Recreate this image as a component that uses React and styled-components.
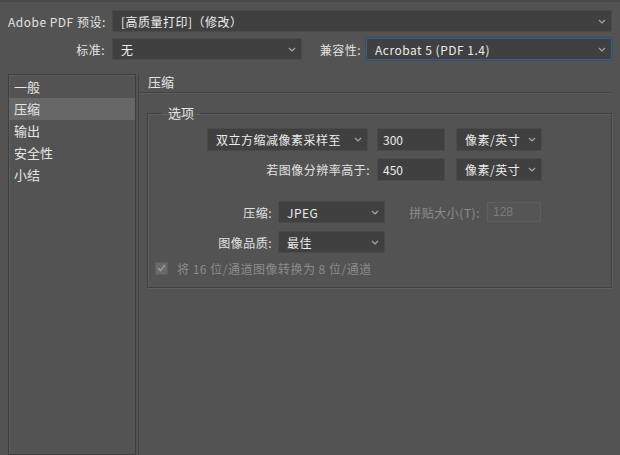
import React from 'react';
import styled, { createGlobalStyle } from 'styled-components';

const Global = createGlobalStyle`
  html, body { margin: 0; padding: 0; background: #535353; }
  body {
    font-family: "Noto Sans CJK SC", "Liberation Sans", sans-serif;
    font-size: 12px;
    color: #e2e2e2;
  }
`;

const Window = styled.div`
  width: 620px;
  height: 455px;
  overflow: hidden;
  box-sizing: border-box;
  border-top: 2px solid #474747;
  background: #535353;
  padding: 8px 8px 0 8px;
  display: flex;
  flex-direction: column;
`;

const TopRow = styled.div`
  display: flex;
  align-items: center;
  height: 22px;
  margin-bottom: ${p => p.$mb || 0}px;
`;

const Label = styled.div`
  width: ${p => p.$w}px;
  flex: none;
  text-align: right;
  padding-right: ${p => p.$pr ?? 6}px;
  box-sizing: border-box;
  white-space: nowrap;
  color: ${p => (p.$dim ? '#8e8e8e' : '#e2e2e2')};
  letter-spacing: 0.5px;
`;

const SelectBox = styled.div`
  box-sizing: border-box;
  height: ${p => p.$h || 22}px;
  width: ${p => (p.$w ? p.$w + 'px' : 'auto')};
  flex: ${p => (p.$w ? 'none' : '1')};
  background: #404040;
  border: 1px solid ${p => (p.$focus ? '#3d5c7e' : '#4a4a4a')};
  box-shadow: ${p => (p.$focus ? '0 0 0 1px #34506d' : 'none')};
  display: flex;
  align-items: center;
  justify-content: space-between;
  padding: 0 5px 0 8px;
  color: #ececec;
  white-space: nowrap;
  letter-spacing: 0.5px;
`;

const Chevron = () => (
  <svg width="8" height="5" viewBox="0 0 8 5">
    <polyline points="1,1 4,4 7,1" fill="none" stroke="#a8a8a8" strokeWidth="1.2" />
  </svg>
);

const Select = ({ children, ...rest }) => (
  <SelectBox {...rest}>
    <span>{children}</span>
    <Chevron />
  </SelectBox>
);

const Input = styled.div`
  box-sizing: border-box;
  width: ${p => p.$w}px;
  height: ${p => p.$h || 23}px;
  flex: none;
  background: ${p => (p.$dim ? '#555' : '#404040')};
  border: 1px solid ${p => (p.$dim ? '#5e5e5e' : '#4b4b4b')};
  color: ${p => (p.$dim ? '#7c7c7c' : '#ececec')};
  display: flex;
  align-items: center;
  padding-left: 5px;
  font-family: ${p => (p.$dim ? '"Liberation Sans", sans-serif' : 'inherit')};
`;

const Body = styled.div`
  flex: 1;
  display: flex;
  margin-top: 14px;
  min-height: 0;
`;

const Nav = styled.div`
  width: 128px;
  flex: none;
  box-sizing: border-box;
  border: 1px solid #3f3f3f;
  box-shadow: inset 1px 1px 0 #5d5d5d;
  padding-top: 1px;
`;

const NavItem = styled.div`
  height: 22px;
  line-height: 22px;
  padding-left: 5px;
  font-size: 13px;
  background: ${p => (p.$active ? '#676767' : 'transparent')};
  color: #e6e6e6;
`;

const Panel = styled.div`
  flex: 1;
  margin-left: 2px;
  border-left: 1px solid #444;
  display: flex;
  flex-direction: column;
`;

const Heading = styled.div`
  height: 18px;
  line-height: 16px;
  padding-left: 9px;
  font-size: 13px;
  border-bottom: 1px solid #444;
  box-shadow: 0 1px 0 #5c5c5c;
  color: #e6e6e6;
`;

const Group = styled.fieldset`
  margin: 12px 0 0 8px;
  padding: 7px 0 11px 0;
  border: 1px solid #424242;
  box-shadow: inset 1px 1px 0 #5e5e5e, 1px 1px 0 #5e5e5e;
  display: flex;
  flex-direction: column;
  min-width: 0;
`;

const Legend = styled.legend`
  margin-left: 14px;
  padding: 0 6px;
  line-height: 16px;
  font-size: 13px;
  color: #e6e6e6;
`;

const Row = styled.div`
  display: flex;
  align-items: center;
  height: ${p => p.$h || 23}px;
  margin-top: ${p => p.$mt || 0}px;
`;

const LabelCell = styled.div`
  width: ${p => p.$w}px;
  flex: none;
  display: flex;
  justify-content: flex-end;
  align-items: center;
  padding-right: ${p => p.$pr ?? 7}px;
  box-sizing: border-box;
  white-space: nowrap;
  letter-spacing: 0.5px;
`;

const Gap = styled.div`
  width: ${p => p.$w}px;
  flex: none;
`;

const Check = styled.div`
  display: flex;
  align-items: center;
  gap: 9px;
  padding-left: 7px;
  color: #8b8b8b;
  letter-spacing: 0.5px;
`;

const Box = styled.div`
  width: 11px;
  height: 11px;
  background: #6a6a6a;
  border: 1px solid #5e5e5e;
  display: flex;
  align-items: center;
  justify-content: center;
`;

export default function App() {
  return (
    <>
      <Global />
      <Window>
        <TopRow $mb={6}>
          <Label $w={104} $pr={7}>Adobe PDF 预设:</Label>
          <Select>[高质量打印]（修改）</Select>
        </TopRow>
        <TopRow>
          <Label $w={104} $pr={7}>标准:</Label>
          <Select $w={190}>无</Select>
          <Gap $w={14} />
          <Label $w={50} $pr={5}>兼容性:</Label>
          <Select $focus>Acrobat 5 (PDF 1.4)</Select>
        </TopRow>
        <Body>
          <Nav>
            <NavItem>一般</NavItem>
            <NavItem $active>压缩</NavItem>
            <NavItem>输出</NavItem>
            <NavItem>安全性</NavItem>
            <NavItem>小结</NavItem>
          </Nav>
          <Panel>
            <Heading>压缩</Heading>
            <Group>
              <Legend>选项</Legend>
              <Row>
                <LabelCell $w={229} $pr={9}>
                  <Select $w={161} $h={23}>双立方缩减像素采样至</Select>
                </LabelCell>
                <Input $w={68}>300</Input>
                <Gap $w={11} />
                <Select $w={86} $h={23}>像素/英寸</Select>
              </Row>
              <Row $mt={7}>
                <LabelCell $w={229}>若图像分辨率高于:</LabelCell>
                <Input $w={68}>450</Input>
                <Gap $w={11} />
                <Select $w={86} $h={23}>像素/英寸</Select>
              </Row>
              <Row $mt={20} $h={22}>
                <LabelCell $w={130} $pr={6}>压缩:</LabelCell>
                <Select $w={107}>JPEG</Select>
                <Gap $w={23} />
                <Label $w={79} $pr={7} $dim>拼贴大小(T):</Label>
                <Input $w={54} $h={20} $dim>128</Input>
              </Row>
              <Row $mt={8} $h={22}>
                <LabelCell $w={130} $pr={6}>图像品质:</LabelCell>
                <Select $w={107}>最佳</Select>
              </Row>
              <Row $mt={7} $h={16}>
                <Check>
                  <Box>
                    <svg width="9" height="8" viewBox="0 0 9 8">
                      <polyline points="1,4 3.5,6.5 8,1" fill="none" stroke="#9a9a9a" strokeWidth="1.6" />
                    </svg>
                  </Box>
                  将 16 位/通道图像转换为 8 位/通道
                </Check>
              </Row>
            </Group>
          </Panel>
        </Body>
      </Window>
    </>
  );
}
